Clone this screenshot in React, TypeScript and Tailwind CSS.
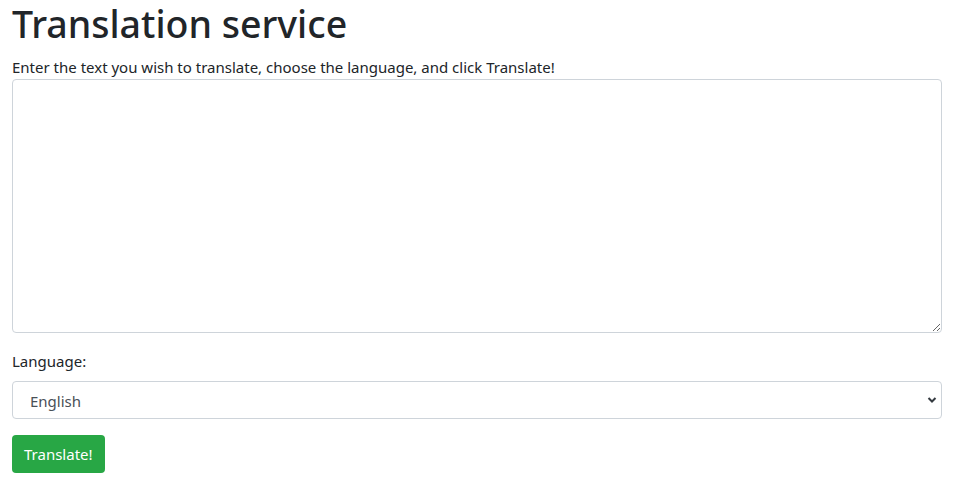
import React from "react";

const font = { fontFamily: '"Segoe UI", "Noto Sans", sans-serif' };

export default function App() {
  return (
    <div className="pl-3 pr-[14px] text-[#212529] bg-white min-h-[495px]" style={font}>
      <h1 className="text-[37.5px] leading-[48px] font-medium mb-2">Translation service</h1>
      <label className="block text-[15px] leading-[24px] -mt-[1px]">
        Enter the text you wish to translate, choose the language, and click Translate!
      </label>
      <textarea className="block w-full h-[254px] border border-[#ced4da] rounded-[4px] px-3 py-1.5 outline-none" />
      <div className="mt-4 mb-2 text-[15px] leading-[24px]">Language:</div>
      <div className="relative">
        <select className="appearance-none block w-full h-[38px] border border-[#ced4da] rounded-[4px] pl-[17px] pt-[3px] text-[15px] text-[#495057] bg-white outline-none">
          <option>English</option>
        </select>
        <svg
          className="absolute right-[5px] top-[15px] pointer-events-none"
          width="10"
          height="8"
          viewBox="0 0 10 8"
        >
          <path d="M1.5 2 L5 5.5 L8.5 2" stroke="#343a40" strokeWidth="2" fill="none" />
        </svg>
      </div>
      <button className="mt-4 h-[38px] px-3 rounded-[4px] bg-[#28a745] text-white text-[15px] leading-[24px]">
        Translate!
      </button>
    </div>
  );
}
